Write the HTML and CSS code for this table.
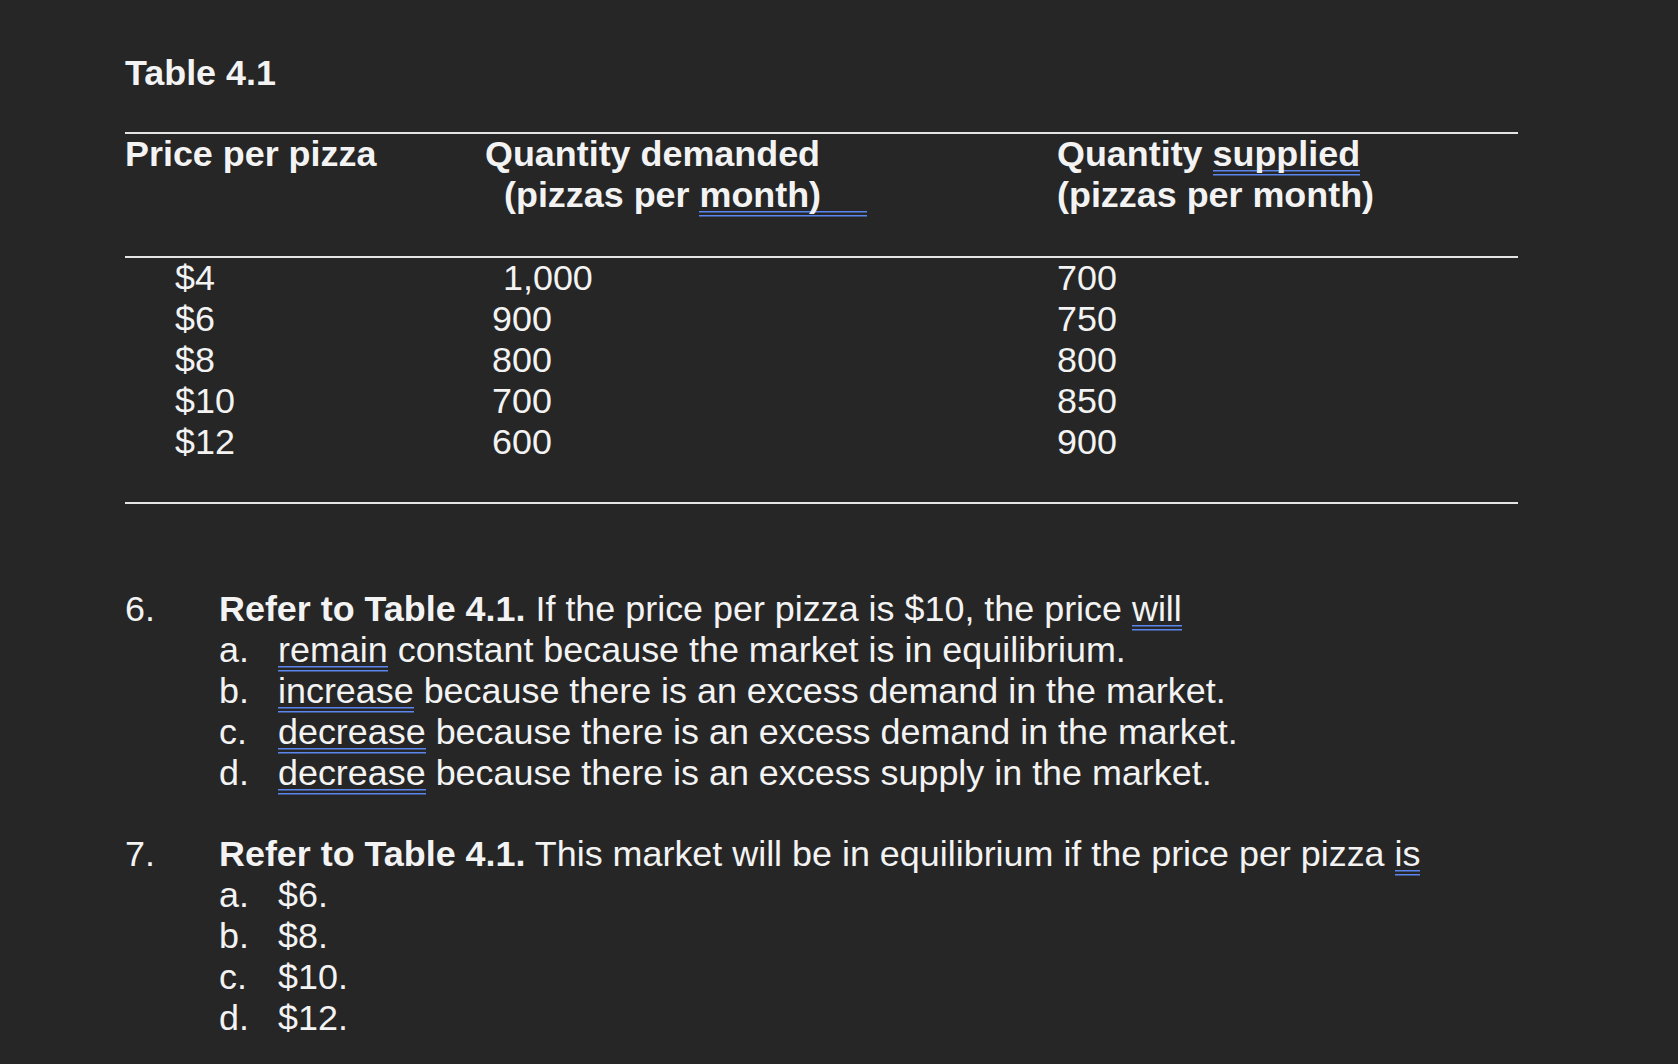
FILE: index.html
```html
<!DOCTYPE html>
<html lang="en">
<head>
<meta charset="utf-8">
<title>Table 4.1</title>
<link rel="stylesheet" href="styles.css">
</head>
<body>
<main class="page">
  <h1 class="title">Table 4.1</h1>

  <section class="table">
    <div class="thead">
      <div class="cell">Price per pizza</div>
      <div class="cell">
        <div>Quantity demanded</div>
        <div class="sub"><span>(pizzas per </span><span class="u ext">month)</span></div>
      </div>
      <div class="cell">
        <div>Quantity <span class="u">supplied</span></div>
        <div>(pizzas per month)</div>
      </div>
    </div>

    <div class="tbody">
      <div class="cell c1">$4</div><div class="cell c2 lead">1,000</div><div class="cell c3">700</div>
      <div class="cell c1">$6</div><div class="cell c2">900</div><div class="cell c3">750</div>
      <div class="cell c1">$8</div><div class="cell c2">800</div><div class="cell c3">800</div>
      <div class="cell c1">$10</div><div class="cell c2">700</div><div class="cell c3">850</div>
      <div class="cell c1">$12</div><div class="cell c2">600</div><div class="cell c3">900</div>
    </div>
  </section>

  <section class="q q6">
    <div class="num">6.</div>
    <div class="body">
      <div class="stem"><b>Refer to Table 4.1.</b> If the price per pizza is $10, the price <span class="u">will</span></div>
      <ol class="opts">
        <li><span class="lbl">a.</span><span><span class="u">remain</span> constant because the market is in equilibrium.</span></li>
        <li><span class="lbl">b.</span><span><span class="u">increase</span> because there is an excess demand in the market.</span></li>
        <li><span class="lbl">c.</span><span><span class="u">decrease</span> because there is an excess demand in the market.</span></li>
        <li><span class="lbl">d.</span><span><span class="u">decrease</span> because there is an excess supply in the market.</span></li>
      </ol>
    </div>
  </section>

  <section class="q q7">
    <div class="num">7.</div>
    <div class="body">
      <div class="stem"><b>Refer to Table 4.1.</b> This market will be in equilibrium if the price per pizza <span class="u">is</span></div>
      <ol class="opts">
        <li><span class="lbl">a.</span><span>$6.</span></li>
        <li><span class="lbl">b.</span><span>$8.</span></li>
        <li><span class="lbl">c.</span><span>$10.</span></li>
        <li><span class="lbl">d.</span><span>$12.</span></li>
      </ol>
    </div>
  </section>
</main>
</body>
</html>
```

FILE: styles.css
```css
html, body {
  margin: 0;
  padding: 0;
  background: #262626;
}

body {
  font-family: "Liberation Sans", Arial, Helvetica, sans-serif;
  font-size: 35.9px;
  line-height: 41px;
  color: #f3f3f3;
}

.page {
  padding: 53px 0 0 125px;
}

.title {
  margin: 0;
  font-size: inherit;
  line-height: inherit;
  font-weight: 700;
}

.table {
  width: 1393px;
  margin-top: 38px;
}

.thead,
.tbody {
  display: grid;
  grid-template-columns: 360px 572px 1fr;
}

.thead {
  font-weight: 700;
  border-top: 2px solid #e4e4e4;
  border-bottom: 2px solid #e4e4e4;
  padding-bottom: 40px;
}

.thead .sub {
  padding-left: 19px;
}

.tbody {
  border-bottom: 2px solid #e4e4e4;
  padding-bottom: 39px;
}

.c1 { padding-left: 50px; }
.c2 { padding-left: 7px; }
.c2.lead { padding-left: 18px; }

.q {
  display: grid;
  grid-template-columns: 94px 1fr;
}

.q6 { margin-top: 85px; }
.q7 { margin-top: 40px; }

.stem b { font-weight: 700; }

.opts {
  list-style: none;
  margin: 0;
  padding: 0;
}

.opts li {
  display: grid;
  grid-template-columns: 59px 1fr;
}

.u {
  background-image: linear-gradient(#5a86ee, #5a86ee), linear-gradient(#5a86ee, #5a86ee);
  background-size: 100% 1.5px, 100% 1.5px;
  background-repeat: no-repeat;
  background-position: 0 calc(100% - 4.5px), 0 calc(100% - 0.8px);
  padding-bottom: 2px;
}

.u.ext {
  padding-right: 46px;
}
```
